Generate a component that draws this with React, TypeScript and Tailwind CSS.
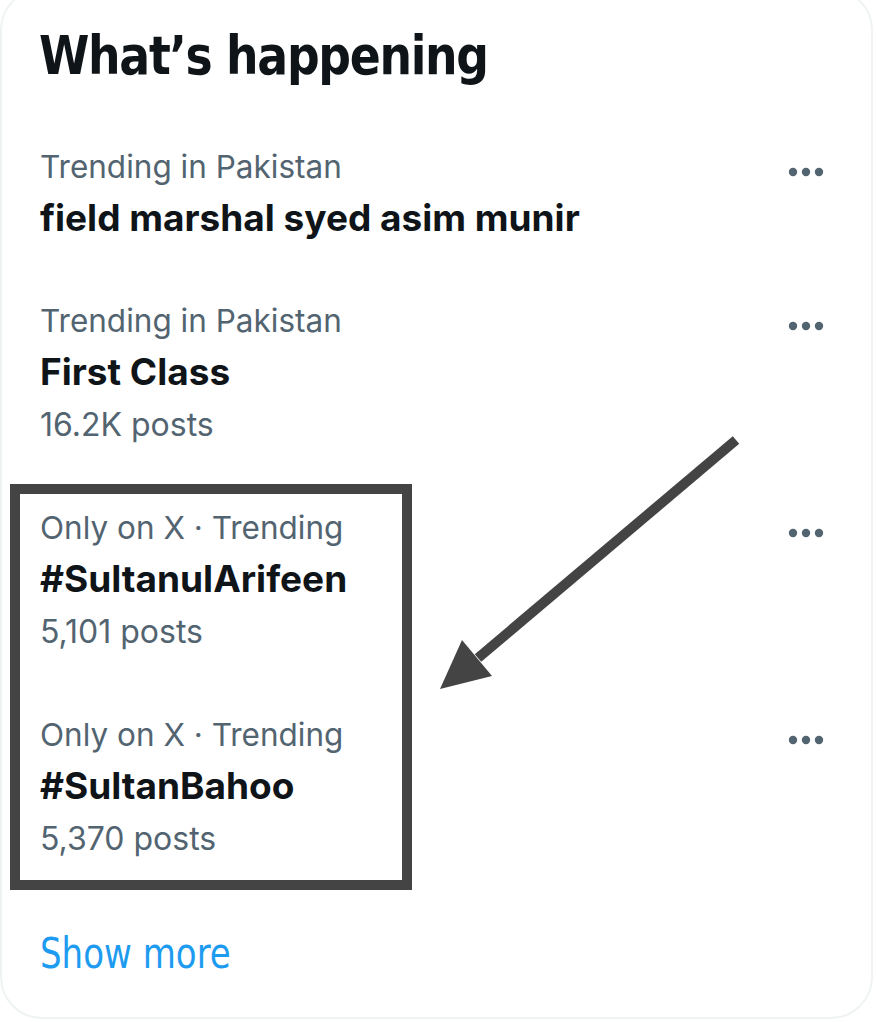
import React from 'react';

type Trend = { context: string; title: string; posts?: string };

const trends: Trend[] = [
  { context: 'Trending in Pakistan', title: 'field marshal syed asim munir' },
  { context: 'Trending in Pakistan', title: 'First Class', posts: '16.2K posts' },
  { context: 'Only on X · Trending', title: '#SultanulArifeen', posts: '5,101 posts' },
  { context: 'Only on X · Trending', title: '#SultanBahoo', posts: '5,370 posts' },
];

const body = { fontFamily: 'Inter, "Noto Sans", sans-serif' };
const narrow = { fontFamily: '"DejaVu Sans Condensed", "Liberation Sans", sans-serif' };

const MoreDots = () => (
  <svg width="40" height="16" viewBox="0 0 40 16" className="text-[#536471]">
    <circle cx="7" cy="8" r="4.2" fill="currentColor" />
    <circle cx="20" cy="8" r="4.2" fill="currentColor" />
    <circle cx="33" cy="8" r="4.2" fill="currentColor" />
  </svg>
);

const TrendRow = ({ t }: { t: Trend }) => (
  <div className="flex justify-between pl-[38px] pr-[45px] py-[26px]">
    <div className="flex flex-col">
      <span className="text-[31.5px] leading-[50px] text-[#536471]">{t.context}</span>
      <span className="text-[37px] leading-[52px] font-bold text-[#0f1419]">{t.title}</span>
      {t.posts && <span className="text-[32px] leading-[53px] text-[#536471]">{t.posts}</span>}
    </div>
    <div className="pt-[22px]">
      <MoreDots />
    </div>
  </div>
);

export default function App() {
  return (
    <div className="relative w-[876px] h-[1022px] overflow-hidden bg-white" style={body}>
      <div className="-mt-3 w-[873px] border-2 border-[#eff3f4] rounded-[42px] bg-white">
        <div className="pl-[37px] pt-[34px] pb-[28px]">
          <h2
            className="text-[54px] leading-[64px] font-bold text-[#0f1419] tracking-tight origin-left scale-x-[0.94]"
            style={narrow}
          >
            What’s happening
          </h2>
        </div>
        {trends.map((t, i) => (
          <TrendRow key={i} t={t} />
        ))}
        <div className="pl-[38px] pt-[36px] pb-[38px]">
          <div className="text-[43px] leading-[52px] text-[#1d9bf0] origin-left scale-x-[0.88]" style={narrow}>
            Show more
          </div>
        </div>
      </div>

      {/* annotation: highlight box */}
      <div className="absolute left-[10px] top-[484px] w-[402px] h-[406px] border-[10px] border-[#444444] pointer-events-none" />

      {/* annotation: arrow */}
      <svg className="absolute inset-0 pointer-events-none" width="876" height="1022" viewBox="0 0 876 1022">
        <line x1="736" y1="440" x2="478" y2="658" stroke="#444444" strokeWidth="10" />
        <polygon points="440,689 462,640 492,676" fill="#444444" />
      </svg>
    </div>
  );
}
